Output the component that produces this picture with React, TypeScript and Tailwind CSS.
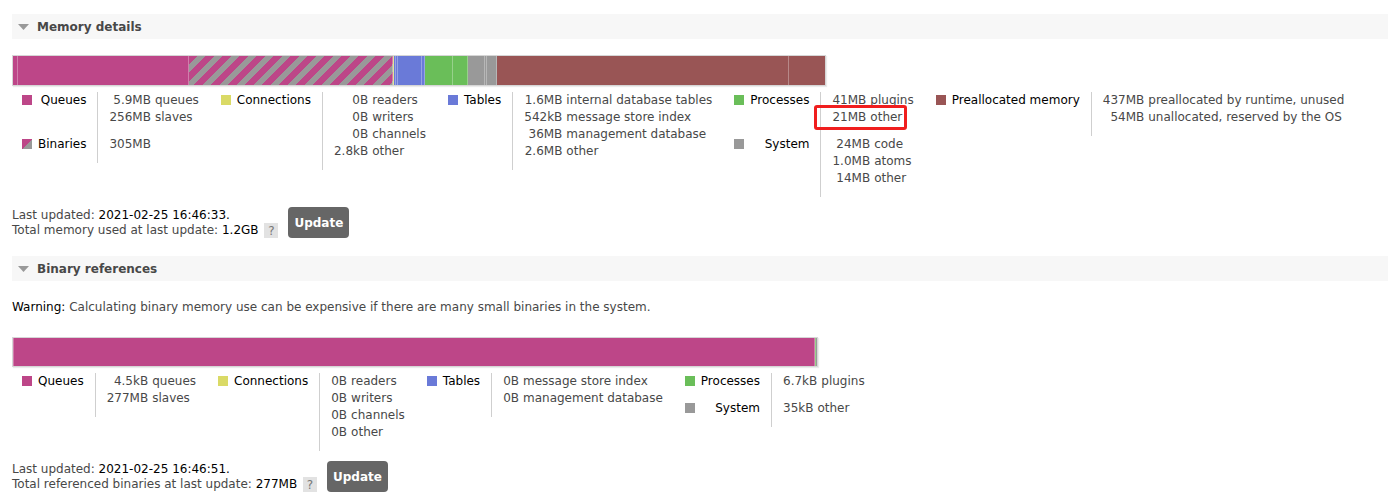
import React from "react";

type Seg = { v: number; cls: string };
type Row = [string, string];
type Item = { label: string; swatch: string; rows: Row[] };

const PINK = "bg-[#bd4688]";
const STRIPE = "bg-[image:repeating-linear-gradient(135deg,#bd4688_0px,#bd4688_6px,#999_6px,#999_12px)]";
const YELLOW = "bg-[#dada66]";
const BLUE = "bg-[#6a7ad8]";
const GREEN = "bg-[#6abe59]";
const GRAY = "bg-[#999]";
const BROWN = "bg-[#995555]";

// values in MB
const memorySegs: Seg[] = [
  { v: 5.9, cls: PINK },
  { v: 256, cls: PINK },
  { v: 305, cls: STRIPE },
  { v: 0.0028, cls: YELLOW },
  { v: 1.6, cls: BLUE },
  { v: 0.542, cls: BLUE },
  { v: 36, cls: BLUE },
  { v: 2.6, cls: BLUE },
  { v: 41, cls: GREEN },
  { v: 21, cls: GREEN },
  { v: 24, cls: GRAY },
  { v: 1.0, cls: GRAY },
  { v: 14, cls: GRAY },
  { v: 437, cls: BROWN },
  { v: 54, cls: BROWN },
];

const binarySegs: Seg[] = [
  { v: 0.0045, cls: PINK },
  { v: 277, cls: PINK },
  { v: 0.0067, cls: GREEN },
  { v: 0.035, cls: GRAY },
];

const memoryKey: Item[][] = [
  [
    { label: "Queues", swatch: PINK, rows: [["5.9MB", "queues"], ["256MB", "slaves"]] },
    {
      label: "Binaries",
      swatch: "bg-[image:linear-gradient(135deg,#bd4688_50%,#999_50%)]",
      rows: [["305MB", ""]],
    },
  ],
  [
    {
      label: "Connections",
      swatch: YELLOW,
      rows: [["0B", "readers"], ["0B", "writers"], ["0B", "channels"], ["2.8kB", "other"]],
    },
  ],
  [
    {
      label: "Tables",
      swatch: BLUE,
      rows: [
        ["1.6MB", "internal database tables"],
        ["542kB", "message store index"],
        ["36MB", "management database"],
        ["2.6MB", "other"],
      ],
    },
  ],
  [
    { label: "Processes", swatch: GREEN, rows: [["41MB", "plugins"], ["21MB", "other"]] },
    { label: "System", swatch: GRAY, rows: [["24MB", "code"], ["1.0MB", "atoms"], ["14MB", "other"]] },
  ],
  [
    {
      label: "Preallocated memory",
      swatch: BROWN,
      rows: [
        ["437MB", "preallocated by runtime, unused"],
        ["54MB", "unallocated, reserved by the OS"],
      ],
    },
  ],
];

const binaryKey: Item[][] = [
  [{ label: "Queues", swatch: PINK, rows: [["4.5kB", "queues"], ["277MB", "slaves"]] }],
  [
    {
      label: "Connections",
      swatch: YELLOW,
      rows: [["0B", "readers"], ["0B", "writers"], ["0B", "channels"], ["0B", "other"]],
    },
  ],
  [
    {
      label: "Tables",
      swatch: BLUE,
      rows: [["0B", "message store index"], ["0B", "management database"]],
    },
  ],
  [
    { label: "Processes", swatch: GREEN, rows: [["6.7kB", "plugins"]] },
    { label: "System", swatch: GRAY, rows: [["35kB", "other"]] },
  ],
];

function SectionHeader({ title }: { title: string }) {
  return (
    <div className="flex h-[25px] items-center bg-[#f7f7f7] pl-[6px]">
      <svg width="11" height="6" viewBox="0 0 11 6" className="mt-[1px]">
        <path d="M0 0H11L5.5 6Z" fill="#999" />
      </svg>
      <span className="ml-[8px] font-bold text-[#484848]">{title}</span>
    </div>
  );
}

function Bar({ segs, className }: { segs: Seg[]; className: string }) {
  return (
    <div className={`flex border border-[#d6d6d6] shadow-[1px_1px_1px_rgba(0,0,0,0.08)] ${className}`}>
      {segs.map((s, i) => (
        <div
          key={i}
          className={`h-full basis-0 ${s.cls} ${i < segs.length - 1 ? "border-r border-r-white/30" : ""}`}
          style={{ flexGrow: s.v, minWidth: s.v > 0 ? 1 : 0 }}
        />
      ))}
    </div>
  );
}

function KeyColumn({ items }: { items: Item[] }) {
  return (
    <div className="grid grid-cols-[auto_auto] content-start">
      {items.map((it) => (
        <React.Fragment key={it.label}>
          <div className="flex justify-between gap-[6px] pb-[10px] pl-[10px] pr-[11px]">
            <span className={`mt-[3px] h-[10px] w-[10px] shrink-0 ${it.swatch}`} />
            <span className="text-black">{it.label}</span>
          </div>
          <div className="border-l border-[#cfcfcf] pb-[10px] pl-[11px] pr-[12px]">
            <div className="grid grid-cols-[auto_auto] justify-start gap-x-[4px]">
              {it.rows.map(([n, l], i) => (
                <React.Fragment key={i}>
                  <span className="text-right">{n}</span>
                  <span>{l}</span>
                </React.Fragment>
              ))}
            </div>
          </div>
        </React.Fragment>
      ))}
    </div>
  );
}

function Key({ cols }: { cols: Item[][] }) {
  return (
    <div className="flex items-start leading-[17px]">
      {cols.map((c, i) => (
        <KeyColumn key={i} items={c} />
      ))}
    </div>
  );
}

function Updated({ time, total, value, className }: { time: string; total: string; value: string; className: string }) {
  return (
    <div className={`flex items-center ${className}`}>
      <div className="leading-[15px]">
        <div>
          Last updated: <span className="text-black">{time}</span>
        </div>
        <div>
          {total} <span className="text-black">{value}</span>{" "}
          <span className="ml-[2px] inline-block h-[15px] w-[14px] bg-[#e2e2e2] text-center align-top leading-[16px] text-[#777]">
            ?
          </span>
        </div>
      </div>
      <button className="ml-[10px] h-[31px] rounded-[4px] bg-[#666] px-[6px] font-bold text-white">Update</button>
    </div>
  );
}

export default function App() {
  return (
    <div className="relative min-h-[503px] bg-white pl-[12px] pt-[14px] font-['DejaVu_Sans',sans-serif] text-[12px] text-[#484848]">
      <SectionHeader title="Memory details" />
      <Bar segs={memorySegs} className="mt-[16px] h-[31px] w-[814px]" />
      <div className="mt-[6px]">
        <Key cols={memoryKey} />
      </div>
      <Updated
        className="mt-[10px]"
        time="2021-02-25 16:46:33."
        total="Total memory used at last update:"
        value="1.2GB"
      />

      <div className="mt-[18px]">
        <SectionHeader title="Binary references" />
      </div>
      <p className="mt-[19px] leading-[15px]">
        <span className="text-black">Warning:</span> Calculating binary memory use can be expensive if there are many
        small binaries in the system.
      </p>
      <Bar segs={binarySegs} className="mt-[22px] h-[30px] w-[806px]" />
      <div className="mt-[6px]">
        <Key cols={binaryKey} />
      </div>
      <Updated
        className="mt-[10px]"
        time="2021-02-25 16:46:51."
        total="Total referenced binaries at last update:"
        value="277MB"
      />

      {/* red annotation box over "21MB other" */}
      <div className="pointer-events-none absolute left-[814px] top-[105px] h-[25px] w-[93px] rounded-[3px] border-[3px] border-[#f01e1e]" />
    </div>
  );
}
